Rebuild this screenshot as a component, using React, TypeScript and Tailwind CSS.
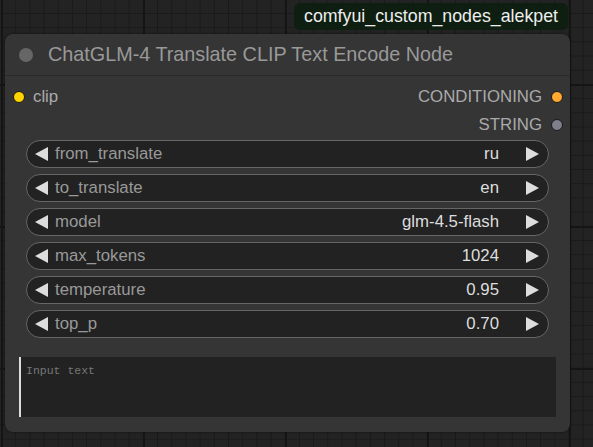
const widgets = [
  { label: 'from_translate', value: 'ru' },
  { label: 'to_translate', value: 'en' },
  { label: 'model', value: 'glm-4.5-flash' },
  { label: 'max_tokens', value: '1024' },
  { label: 'temperature', value: '0.95' },
  { label: 'top_p', value: '0.70' },
]

function Arrow({ dir }: { dir: 'left' | 'right' }) {
  return (
    <svg width="13" height="14" viewBox="0 0 13 14" className="shrink-0">
      <polygon points={dir === 'left' ? '13,0 13,14 0,7' : '0,0 0,14 13,7'} fill="#dddddd" />
    </svg>
  )
}

function Widget({ label, value }: { label: string; value: string }) {
  return (
    <div className="flex h-[28px] items-center rounded-full border border-[#666] bg-[#222] pl-[8px] pr-[9px]">
      <Arrow dir="left" />
      <span className="ml-[7px] text-[#999]">{label}</span>
      <span className="ml-auto mr-[27px] text-[#ddd]">{value}</span>
      <Arrow dir="right" />
    </div>
  )
}

export default function App() {
  return (
    <div className="relative h-[447px] w-[593px] overflow-hidden bg-[#232323] font-['Liberation_Sans',Arial,sans-serif] [background-image:linear-gradient(to_right,#151515_2px,transparent_2px),linear-gradient(to_bottom,#151515_2px,transparent_2px),linear-gradient(to_right,#1a1a1a_1px,transparent_1px),linear-gradient(to_bottom,#1a1a1a_1px,transparent_1px)] [background-position:1px_84px,1px_84px,1px_13px,1px_13px] [background-size:142px_142px,142px_142px,14.2px_14.2px,14.2px_14.2px]">
      {/* badge */}
      <div className="absolute left-[294px] top-[3px] flex h-[27px] w-[274px] items-center justify-center rounded-[6px] bg-[#0e1e10] text-[17.8px] text-[#eee]">
        comfyui_custom_nodes_alekpet
      </div>

      {/* node */}
      <div className="absolute left-[5px] top-[34px] flex h-[398px] w-[565px] flex-col rounded-[8px] bg-[#353535] shadow-[0_0_3px_rgba(0,0,0,0.5)]">
        <div className="flex h-[42px] shrink-0 items-center border-b border-[#2a2a2a] pl-[14px]">
          <div className="h-[14px] w-[14px] rounded-full bg-[#666]" />
          <span className="ml-[15px] text-[19.8px] text-[#999]">ChatGLM-4 Translate CLIP Text Encode Node</span>
        </div>

        <div className="flex flex-col pt-[7px] text-[16.8px]">
          <div className="flex h-[28px] items-center">
            <div className="ml-[8px] h-[12px] w-[12px] rounded-full border border-[#1a1a1a] bg-[#ffd500]" />
            <span className="ml-[8px] text-[#aaa]">clip</span>
            <span className="ml-auto text-[#aaa]">CONDITIONING</span>
            <div className="ml-[9px] mr-[7px] h-[12px] w-[12px] rounded-full border border-[#1a1a1a] bg-[#ffa931]" />
          </div>
          <div className="flex h-[28px] items-center justify-end">
            <span className="text-[#aaa]">STRING</span>
            <div className="ml-[9px] mr-[7px] h-[12px] w-[12px] rounded-full border border-[#1a1a1a] bg-[#7f7f8c]" />
          </div>
        </div>

        <div className="mt-[1px] flex flex-col gap-[6px] px-[21px] text-[16.8px]">
          {widgets.map((w) => (
            <Widget key={w.label} label={w.label} value={w.value} />
          ))}
        </div>

        <div className="ml-[14px] mt-[19px] h-[60px] w-[537px] border-l-2 border-[#ddd] bg-[#222] pl-[5px] pt-[5px] font-['Liberation_Mono',monospace] text-[11.5px] text-[#777]">
          Input text
        </div>
      </div>
    </div>
  )
}
